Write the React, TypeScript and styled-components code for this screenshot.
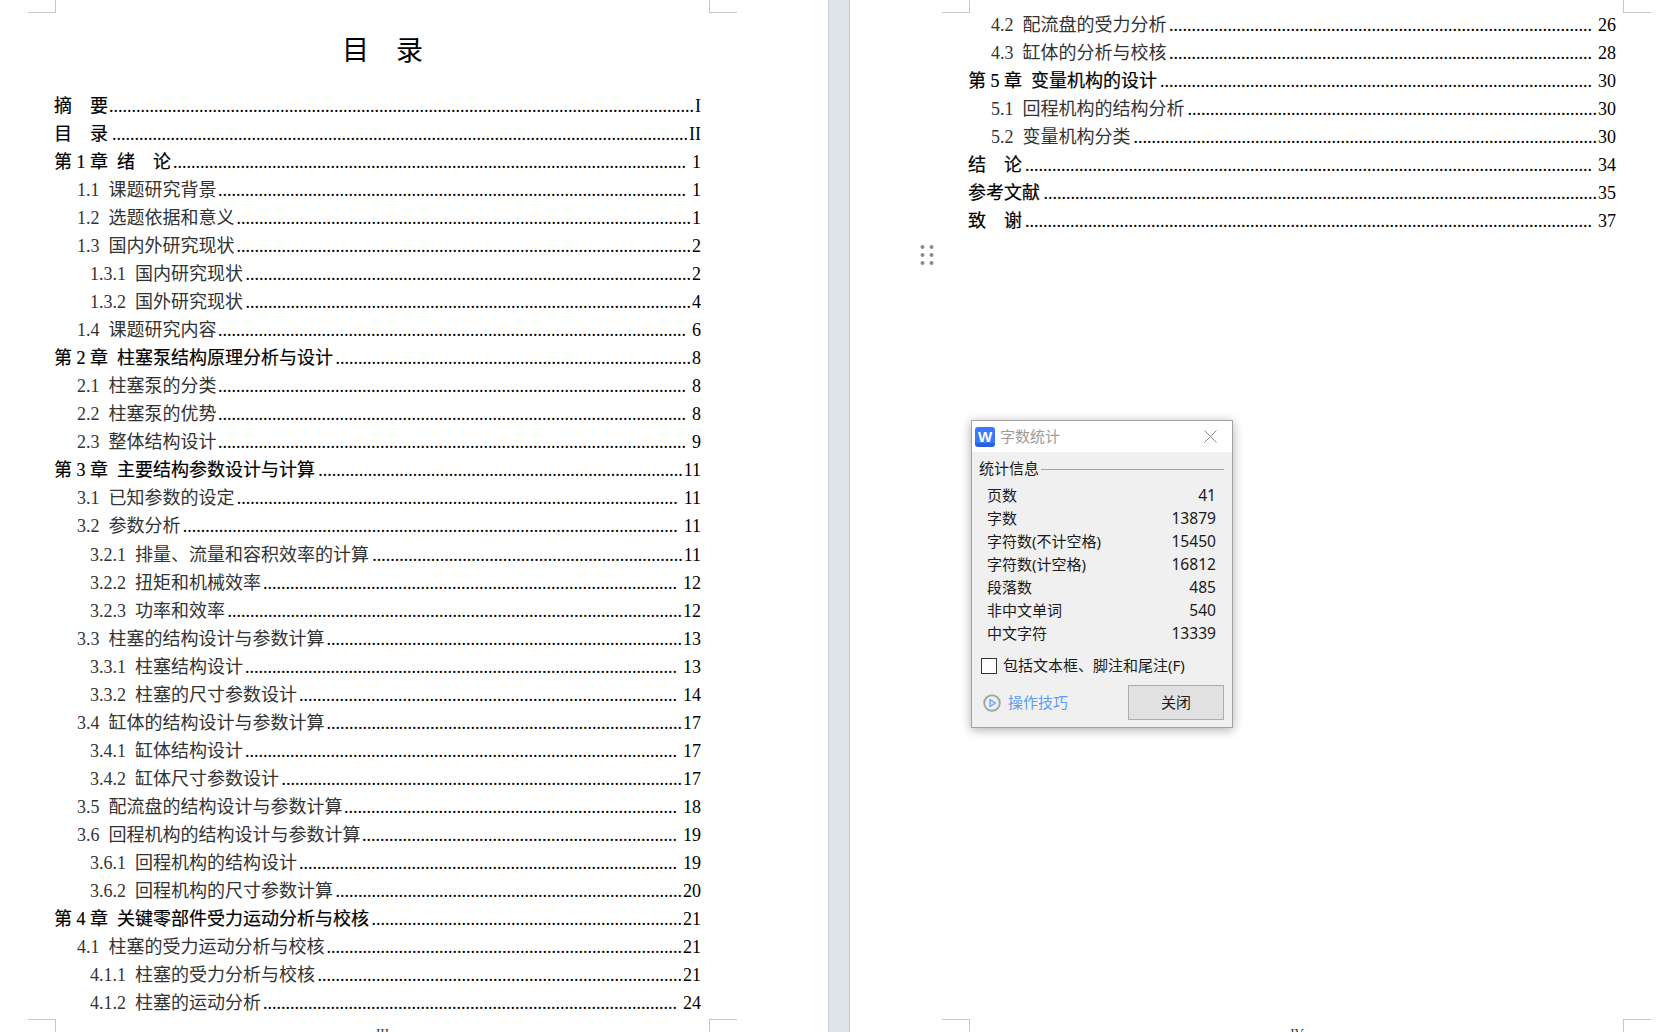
import React from "react";
import styled, { createGlobalStyle } from "styled-components";

const serif = `"Liberation Serif", "Noto Sans CJK SC", serif`;
const ui = `"Noto Sans", "Noto Sans CJK SC", sans-serif`;

const GlobalStyle = createGlobalStyle`
  html, body {
    margin: 0;
    padding: 0;
    background: #ffffff;
  }
`;

const Desk = styled.div`
  display: flex;
  height: 100vh;
  overflow: hidden;
  font-family: ${serif};
  color: #111111;
`;

const Page = styled.div<{ $first?: boolean }>`
  position: relative;
  display: flex;
  flex-direction: column;
  box-sizing: border-box;
  height: 100%;
  overflow: hidden;
  background: #ffffff;
  ${(p) =>
    p.$first
      ? `width: 828px; padding: 33px 127px 0 54px;`
      : `flex: 1; padding: 11.25px 49px 0 118px;`}
`;

const Gutter = styled.div`
  box-sizing: border-box;
  width: 22px;
  flex-shrink: 0;
  background: #dde4ea;
  border-left: 1px solid #ccd0d4;
  border-right: 1px solid #c4c8cc;
`;

const Title = styled.h1`
  margin: 0 0 23.25px;
  padding-left: 10px;
  font-size: 27px;
  font-weight: 400;
  line-height: 36px;
  text-align: center;
  color: #000000;
`;

const Row = styled.div<{ $level: number }>`
  display: flex;
  height: 28.03px;
  line-height: 28.03px;
  font-size: 18px;
  white-space: pre;
  padding-left: ${(p) => indent[p.$level]}px;
  color: ${(p) => (p.$level === 0 ? "#000000" : "#333333")};
  -webkit-text-stroke: ${(p) => (p.$level === 0 ? "0.2px" : "0")};
`;

const Leader = styled.span`
  flex: 1;
  min-width: 0;
  text-align: right;
  color: #000000;
  -webkit-text-stroke: 0;
`;

const PageNo = styled.span<{ $gap?: boolean }>`
  flex-shrink: 0;
  padding-left: ${(p) => (p.$gap ? 6 : 1)}px;
  color: #000000;
  -webkit-text-stroke: 0;
`;

const PageFoot = styled.div`
  margin-top: auto;
  margin-bottom: -8px;
  padding-left: 10px;
  font-size: 13px;
  line-height: 14px;
  text-align: center;
  color: #333333;
`;

const CropMark = styled.i<{ $x: number; $top?: boolean; $flip?: boolean }>`
  position: absolute;
  width: 27px;
  height: 12px;
  left: ${(p) => p.$x}px;
  ${(p) =>
    p.$top
      ? `top: 0; border-bottom: 1px solid #c6c6c6;`
      : `bottom: 0; border-top: 1px solid #c6c6c6;`}
  ${(p) =>
    p.$flip
      ? `border-left: 1px solid #c6c6c6;`
      : `border-right: 1px solid #c6c6c6;`}
`;

const Handle = styled.svg`
  position: absolute;
  left: 70px;
  top: 244px;
`;

const Dialog = styled.div`
  position: absolute;
  left: 121px;
  top: 420px;
  box-sizing: border-box;
  width: 262px;
  height: 308px;
  border: 1px solid #a2a2a2;
  background: #f0f0f0;
  box-shadow: 0 2px 10px rgba(0, 0, 0, 0.32);
  font-family: ${ui};
  font-size: 15px;
  color: #1a1a1a;
`;

const TitleBar = styled.div`
  display: flex;
  align-items: center;
  height: 31px;
  padding: 0 15px 0 3px;
  background: #ffffff;
`;

const AppBadge = styled.span`
  display: flex;
  align-items: center;
  justify-content: center;
  width: 20px;
  height: 20px;
  border-radius: 3px;
  background: linear-gradient(#3c78ff 80%, #2a5fe0 80%);
  color: #ffffff;
  font-family: "Liberation Sans", sans-serif;
  font-size: 15px;
  font-weight: 700;
`;

const DialogTitle = styled.span`
  flex: 1;
  margin-left: 5px;
  padding-bottom: 2px;
  color: #9c9c9c;
`;

const DialogBody = styled.div`
  padding: 8px 8px 7px 7px;
`;

const GroupHead = styled.div`
  display: flex;
  align-items: center;
  gap: 2px;
  height: 18px;
  line-height: 18px;

  &::after {
    content: "";
    flex: 1;
    height: 1px;
    background: #a4a4a4;
  }
`;

// text in this font sits a pixel low next to its box or icon
const Lifted = styled.span`
  padding-bottom: 2px;
`;

const StatList = styled.div`
  margin-top: 5.5px;
  padding: 0 8px 0 8px;
`;

const StatRow = styled.div`
  display: flex;
  justify-content: space-between;
  height: 23px;
  line-height: 23px;
`;

const StatValue = styled.span`
  font-size: 15.6px;
`;

const CheckRow = styled.label`
  display: flex;
  align-items: center;
  gap: 6px;
  height: 18px;
  margin: 12.5px 0 10px 2px;
  line-height: 18px;
`;

const CheckBox = styled.span`
  box-sizing: border-box;
  width: 16px;
  height: 16px;
  border: 1.5px solid #333333;
  background: #ffffff;
`;

const DialogFoot = styled.div`
  display: flex;
  align-items: center;
  justify-content: space-between;
  padding-left: 4px;
`;

const TipLink = styled.a`
  display: flex;
  align-items: center;
  gap: 7px;
  color: #5b9ef5;
`;

const CloseButton = styled.button`
  box-sizing: border-box;
  width: 96px;
  height: 35px;
  padding: 0 0 2px;
  border: 1px solid #adadad;
  background: #e1e1e1;
  font-family: inherit;
  font-size: 15px;
  color: #1a1a1a;
`;

type Entry = [number, string, string, boolean?];

const indent = [0, 23, 36];
const contentWidth = 647;

const firstPage: Entry[] = [
  [0, "摘　要", "I"],
  [0, "目　录", "II"],
  [0, "第 1 章  绪　论", "1", true],
  [1, "1.1  课题研究背景", "1", true],
  [1, "1.2  选题依据和意义", "1"],
  [1, "1.3  国内外研究现状", "2"],
  [2, "1.3.1  国内研究现状", "2"],
  [2, "1.3.2  国外研究现状", "4"],
  [1, "1.4  课题研究内容", "6", true],
  [0, "第 2 章  柱塞泵结构原理分析与设计", "8"],
  [1, "2.1  柱塞泵的分类", "8", true],
  [1, "2.2  柱塞泵的优势", "8", true],
  [1, "2.3  整体结构设计", "9", true],
  [0, "第 3 章  主要结构参数设计与计算", "11"],
  [1, "3.1  已知参数的设定", "11", true],
  [1, "3.2  参数分析", "11", true],
  [2, "3.2.1  排量、流量和容积效率的计算", "11"],
  [2, "3.2.2  扭矩和机械效率", "12", true],
  [2, "3.2.3  功率和效率", "12"],
  [1, "3.3  柱塞的结构设计与参数计算", "13"],
  [2, "3.3.1  柱塞结构设计", "13", true],
  [2, "3.3.2  柱塞的尺寸参数设计", "14", true],
  [1, "3.4  缸体的结构设计与参数计算", "17"],
  [2, "3.4.1  缸体结构设计", "17", true],
  [2, "3.4.2  缸体尺寸参数设计", "17"],
  [1, "3.5  配流盘的结构设计与参数计算", "18", true],
  [1, "3.6  回程机构的结构设计与参数计算", "19", true],
  [2, "3.6.1  回程机构的结构设计", "19", true],
  [2, "3.6.2  回程机构的尺寸参数计算", "20"],
  [0, "第 4 章  关键零部件受力运动分析与校核", "21"],
  [1, "4.1  柱塞的受力运动分析与校核", "21"],
  [2, "4.1.1  柱塞的受力分析与校核", "21"],
  [2, "4.1.2  柱塞的运动分析", "24", true],
];

const secondPage: Entry[] = [
  [1, "4.2  配流盘的受力分析", "26", true],
  [1, "4.3  缸体的分析与校核", "28", true],
  [0, "第 5 章  变量机构的设计", "30", true],
  [1, "5.1  回程机构的结构分析", "30"],
  [1, "5.2  变量机构分类", "30"],
  [0, "结　论", "34", true],
  [0, "参考文献", "35"],
  [0, "致　谢", "37", true],
];

const stats = [
  ["页数", "41"],
  ["字数", "13879"],
  ["字符数(不计空格)", "15450"],
  ["字符数(计空格)", "16812"],
  ["段落数", "485"],
  ["非中文单词", "540"],
  ["中文字符", "13339"],
];

// advance of a string at 18px: cjk 18, digit 9, roman I 6, space and dot 4.5
const textWidth = (s: string) =>
  [...s].reduce((w, c) => {
    if (c.charCodeAt(0) > 0x2e80) return w + 18;
    if (c === " " || c === ".") return w + 4.5;
    return w + (c === "I" ? 6 : 9);
  }, 0);

const leaderDots = ([level, label, no, gap]: Entry) => {
  const room = contentWidth - indent[level] - textWidth(label) - textWidth(no) - (gap ? 6 : 1);
  return ".".repeat(Math.floor(room / 4.5));
};

const TocRows = ({ rows }: { rows: Entry[] }) => (
  <>
    {rows.map((entry) => {
      const [level, label, no, gap] = entry;
      return (
        <Row key={label} $level={level}>
          <span>{label}</span>
          <Leader>{leaderDots(entry)}</Leader>
          <PageNo $gap={gap}>{no}</PageNo>
        </Row>
      );
    })}
  </>
);

const App = () => {
  return (
    <Desk>
      <GlobalStyle />
      <Page $first>
        <CropMark $x={28} $top />
        <CropMark $x={709} $top $flip />
        <CropMark $x={28} />
        <CropMark $x={709} $flip />
        <Title>目　录</Title>
        <TocRows rows={firstPage} />
        <PageFoot>III</PageFoot>
      </Page>
      <Gutter />
      <Page>
        <CropMark $x={92} $top />
        <CropMark $x={773} $top $flip />
        <CropMark $x={92} />
        <CropMark $x={773} $flip />
        <TocRows rows={secondPage} />
        <PageFoot>IV</PageFoot>
        <Handle width="14" height="22" viewBox="0 0 14 22" fill="#8c8c8c">
          <circle cx="2.5" cy="3" r="2" />
          <circle cx="11.5" cy="3" r="2" />
          <circle cx="2.5" cy="11" r="2" />
          <circle cx="11.5" cy="11" r="2" />
          <circle cx="2.5" cy="19" r="2" />
          <circle cx="11.5" cy="19" r="2" />
        </Handle>
        <Dialog>
          <TitleBar>
            <AppBadge>W</AppBadge>
            <DialogTitle>字数统计</DialogTitle>
            <svg width="13" height="13" viewBox="0 0 13 13" stroke="#8a8a8a" strokeWidth="1">
              <path d="M0.5 0.5 L12.5 12.5 M12.5 0.5 L0.5 12.5" />
            </svg>
          </TitleBar>
          <DialogBody>
            <GroupHead>
              <Lifted>统计信息</Lifted>
            </GroupHead>
            <StatList>
              {stats.map(([name, value]) => (
                <StatRow key={name}>
                  <span>{name}</span>
                  <StatValue>{value}</StatValue>
                </StatRow>
              ))}
            </StatList>
            <CheckRow>
              <CheckBox />
              <Lifted>包括文本框、脚注和尾注(F)</Lifted>
            </CheckRow>
            <DialogFoot>
              <TipLink>
                <svg width="18" height="18" viewBox="0 0 18 18" fill="none">
                  <circle cx="9" cy="9" r="7.8" stroke="#a6a6a6" strokeWidth="2" />
                  <path d="M7 5.5 L12.5 9 L7 12.5 Z" fill="#d6e6fb" stroke="#6aa6f5" strokeWidth="1.4" strokeLinejoin="round" />
                </svg>
                <Lifted>操作技巧</Lifted>
              </TipLink>
              <CloseButton>关闭</CloseButton>
            </DialogFoot>
          </DialogBody>
        </Dialog>
      </Page>
    </Desk>
  );
};

export default App;
